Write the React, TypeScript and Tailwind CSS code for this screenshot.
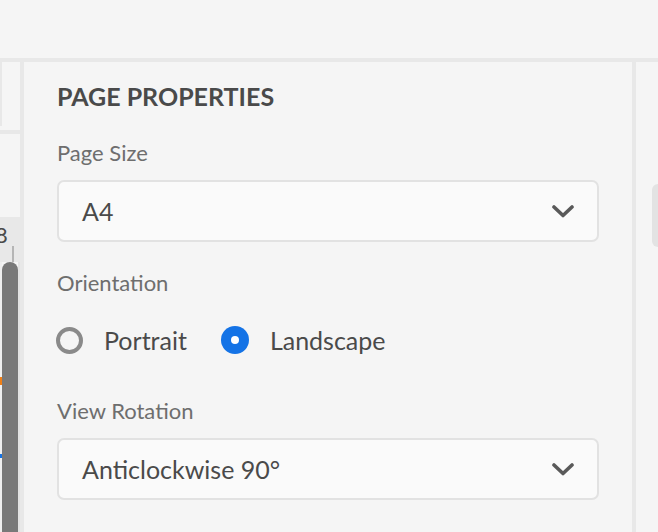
import React from 'react';

function Chevron() {
  return (
    <svg width="22" height="13" viewBox="0 0 22 13" fill="none">
      <path d="M2 2 L11 10.5 L20 2" stroke="#595959" strokeWidth="3.6" strokeLinecap="round" strokeLinejoin="round" />
    </svg>
  );
}

function Select({ value }: { value: string }) {
  return (
    <div className="flex h-[62px] items-center justify-between rounded-[7px] border-2 border-[#e2e2e2] bg-[#fafafa] pl-[23px] pr-[23px]">
      <span className="text-[25px] leading-[26px] text-[#4a4a4a]">{value}</span>
      <Chevron />
    </div>
  );
}

function Radio({ label, checked }: { label: string; checked?: boolean }) {
  return (
    <div className="flex items-center">
      {checked ? (
        <span className="flex h-[28px] w-[28px] items-center justify-center rounded-full bg-[#1473e6]">
          <span className="h-[8px] w-[8px] rounded-full bg-white" />
        </span>
      ) : (
        <span className="h-[27px] w-[27px] rounded-full border-[4px] border-[#8a8a8a]" />
      )}
      <span className="ml-[21px] text-[25px] leading-[28px] text-[#4a4a4a]">{label}</span>
    </div>
  );
}

export default function App() {
  return (
    <div
      className="flex h-[532px] w-[658px] flex-col overflow-hidden bg-[#f5f5f5]"
      style={{ fontFamily: 'Lato, "Noto Sans", sans-serif' }}
    >
      {/* top toolbar */}
      <div className="h-[62px] shrink-0 border-b-4 border-[#e8e8e8] bg-[#f5f5f5]" />

      <div className="flex min-h-0 flex-1">
        {/* left rail (cut off) */}
        <div className="flex w-[20px] shrink-0 flex-col overflow-hidden">
          <div className="flex h-[64px]">
            <div className="w-[2px] bg-[#e8e8e8]" />
          </div>
          <div className="mt-[4px] h-[4px] bg-[#e8e8e8]" />
          <div className="h-[83px]" />
          <div className="relative h-[45px] bg-[#e8e8e8]">
            <span className="absolute -left-[5px] top-[7px] text-[22px] leading-[22px] text-[#4a4a4a]">8</span>
            <div className="absolute bottom-0 left-[12px] h-[16px] w-[2px] bg-[#b5b5b5]" />
          </div>
          <div className="flex flex-1">
            <div className="flex w-[2px] flex-col bg-[#efefef]">
              <div className="mt-[115px] h-[8px] bg-[#f07f16]" />
              <div className="mt-[69px] h-[4px] bg-[#1473e6]" />
            </div>
            <div className="w-[16px] rounded-t-[8px] bg-[#797979]" />
            <div className="w-[2px] bg-[#e3e3e3]" />
          </div>
        </div>
        <div className="w-[4px] shrink-0 bg-[#e8e8e8]" />

        {/* properties panel */}
        <div className="flex flex-1 flex-col px-[33px] pt-[22px]">
          <h2 className="text-[25px] font-bold leading-[25px] text-[#4a4a4a]">PAGE PROPERTIES</h2>

          <div className="mt-[33px] text-[22px] leading-[22px] text-[#6e6e6e]">Page Size</div>
          <div className="mt-[16px]">
            <Select value="A4" />
          </div>

          <div className="mt-[30px] text-[22px] leading-[22px] text-[#6e6e6e]">Orientation</div>
          <div className="mt-[32px] -ml-px flex gap-[34px]">
            <Radio label="Portrait" />
            <Radio label="Landscape" checked />
          </div>

          <div className="mt-[46px] text-[22px] leading-[22px] text-[#6e6e6e]">View Rotation</div>
          <div className="mt-[16px]">
            <Select value="Anticlockwise 90°" />
          </div>
        </div>

        <div className="w-[4px] shrink-0 bg-[#e8e8e8]" />
        {/* right rail (cut off) */}
        <div className="w-[22px] shrink-0">
          <div className="ml-[16px] mt-[122px] h-[63px] w-[12px] rounded-l-[6px] bg-[#e3e3e3]" />
        </div>
      </div>
    </div>
  );
}
